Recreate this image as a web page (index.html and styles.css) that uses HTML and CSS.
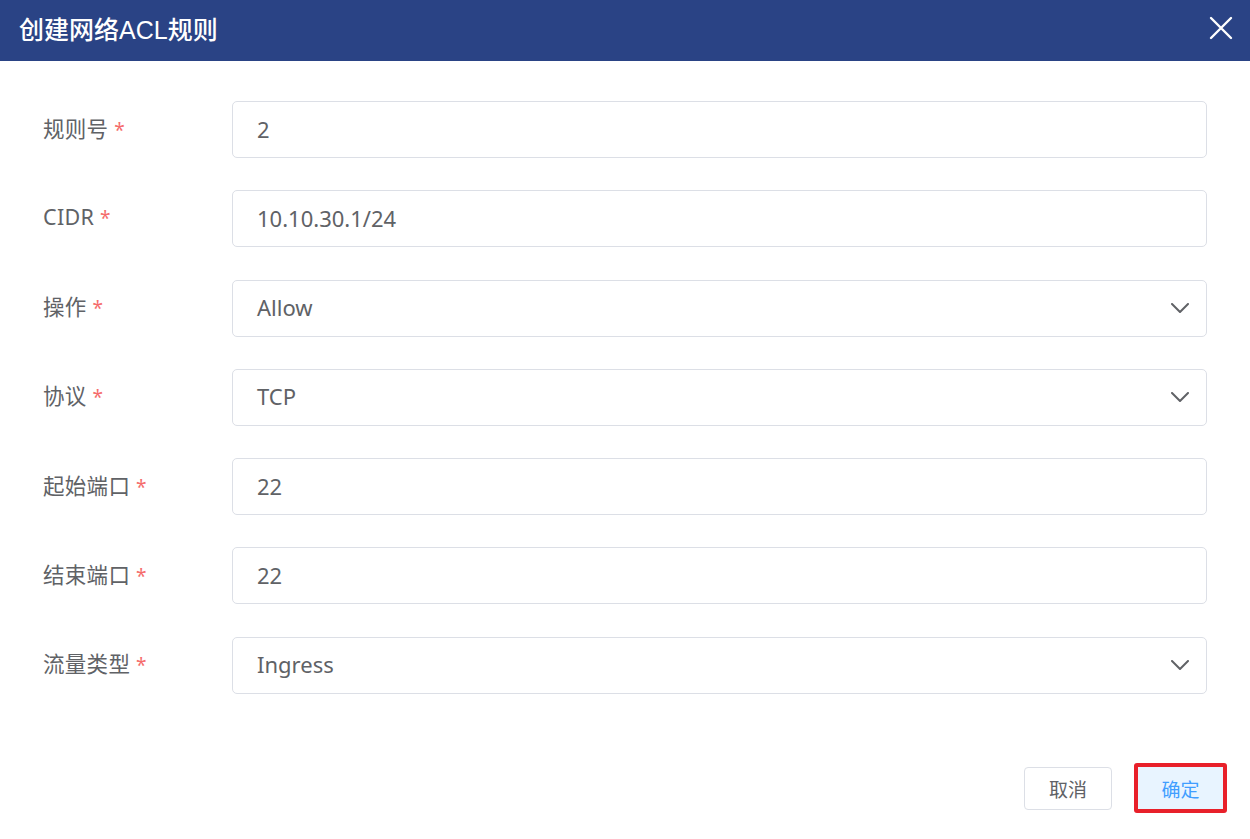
FILE: index.html
```html
<!DOCTYPE html>
<html lang="zh-CN">
<head>
<meta charset="utf-8">
<title>创建网络ACL规则</title>
<link rel="stylesheet" href="styles.css">
</head>
<body>
<div class="dialog">
  <div class="header">
    <div class="title">创建网络ACL规则</div>
    <svg class="close" width="24" height="24" viewBox="0 0 24 24"><path d="M2 2 L22 22 M22 2 L2 22" stroke="#fff" stroke-width="2.4" stroke-linecap="round" fill="none"/></svg>
  </div>
  <div class="form">
    <div class="row"><div class="label">规则号 <span class="req">*</span></div><div class="field"><span class="val">2</span></div></div>
    <div class="row"><div class="label">CIDR <span class="req">*</span></div><div class="field"><span class="val">10.10.30.1/24</span></div></div>
    <div class="row"><div class="label">操作 <span class="req">*</span></div><div class="field select"><span class="val">Allow</span><svg class="chev" width="18" height="10" viewBox="0 0 18 10"><path d="M1 1 L9 9 L17 1" stroke="#606266" stroke-width="2" fill="none" stroke-linecap="round" stroke-linejoin="round"/></svg></div></div>
    <div class="row"><div class="label">协议 <span class="req">*</span></div><div class="field select"><span class="val">TCP</span><svg class="chev" width="18" height="10" viewBox="0 0 18 10"><path d="M1 1 L9 9 L17 1" stroke="#606266" stroke-width="2" fill="none" stroke-linecap="round" stroke-linejoin="round"/></svg></div></div>
    <div class="row"><div class="label">起始端口 <span class="req">*</span></div><div class="field"><span class="val">22</span></div></div>
    <div class="row"><div class="label">结束端口 <span class="req">*</span></div><div class="field"><span class="val">22</span></div></div>
    <div class="row"><div class="label">流量类型 <span class="req">*</span></div><div class="field select"><span class="val">Ingress</span><svg class="chev" width="18" height="10" viewBox="0 0 18 10"><path d="M1 1 L9 9 L17 1" stroke="#606266" stroke-width="2" fill="none" stroke-linecap="round" stroke-linejoin="round"/></svg></div></div>
  </div>
  <div class="footer">
    <button class="btn cancel">取消</button>
    <button class="btn ok">确定</button>
  </div>
</div>
</body>
</html>
```
FILE: styles.css
```css
html, body {
  margin: 0;
  padding: 0;
  background: #ffffff;
}
body {
  font-family: "Noto Sans", "Noto Sans CJK SC", sans-serif;
  width: 1250px;
  height: 839px;
  overflow: hidden;
}
.dialog {
  display: flex;
  flex-direction: column;
  height: 839px;
}
.header {
  height: 61px;
  background: #2a4385;
  display: flex;
  align-items: center;
  justify-content: space-between;
  padding: 0 17px 0 19px;
  box-sizing: border-box;
}
.title {
  color: #ffffff;
  font-size: 25px;
  font-weight: 500;
  font-family: "Liberation Sans", "Noto Sans CJK SC", sans-serif;
  margin-top: -6px;
}
.close {
  display: block;
  margin-top: -5px;
}
.form {
  padding: 40px 43px 0 43px;
  display: flex;
  flex-direction: column;
  gap: 32.3px;
}
.row {
  display: flex;
  align-items: center;
  height: 57px;
}
.label {
  width: 189px;
  flex: none;
  font-size: 21.5px;
  color: #606266;
  margin-top: -5px;
  letter-spacing: 0.3px;
}
.req {
  color: #f56c6c;
  font-size: 19px;
}
.field {
  flex: 1;
  height: 57px;
  box-sizing: border-box;
  border: 1px solid #dcdfe6;
  border-radius: 5px;
  display: flex;
  align-items: center;
  justify-content: space-between;
  padding: 0 17px 0 24px;
}
.val {
  font-size: 22px;
  color: #606266;
  margin-top: -2px;
}
.chev {
  display: block;
}
.footer {
  margin-top: auto;
  display: flex;
  justify-content: flex-end;
  align-items: center;
  gap: 22px;
  padding: 0 23px 26px 0;
}
.btn {
  font-family: "Noto Sans CJK SC", sans-serif;
  font-size: 19px;
  box-sizing: border-box;
  border-radius: 4px;
  cursor: pointer;
}
.cancel {
  width: 88px;
  height: 43px;
  background: #ffffff;
  border: 1px solid #dcdfe6;
  color: #606266;
}
.ok {
  width: 93px;
  height: 50px;
  background: #e8f4ff;
  border: 4px solid #e8202a;
  border-radius: 3px;
  color: #409eff;
}
```
